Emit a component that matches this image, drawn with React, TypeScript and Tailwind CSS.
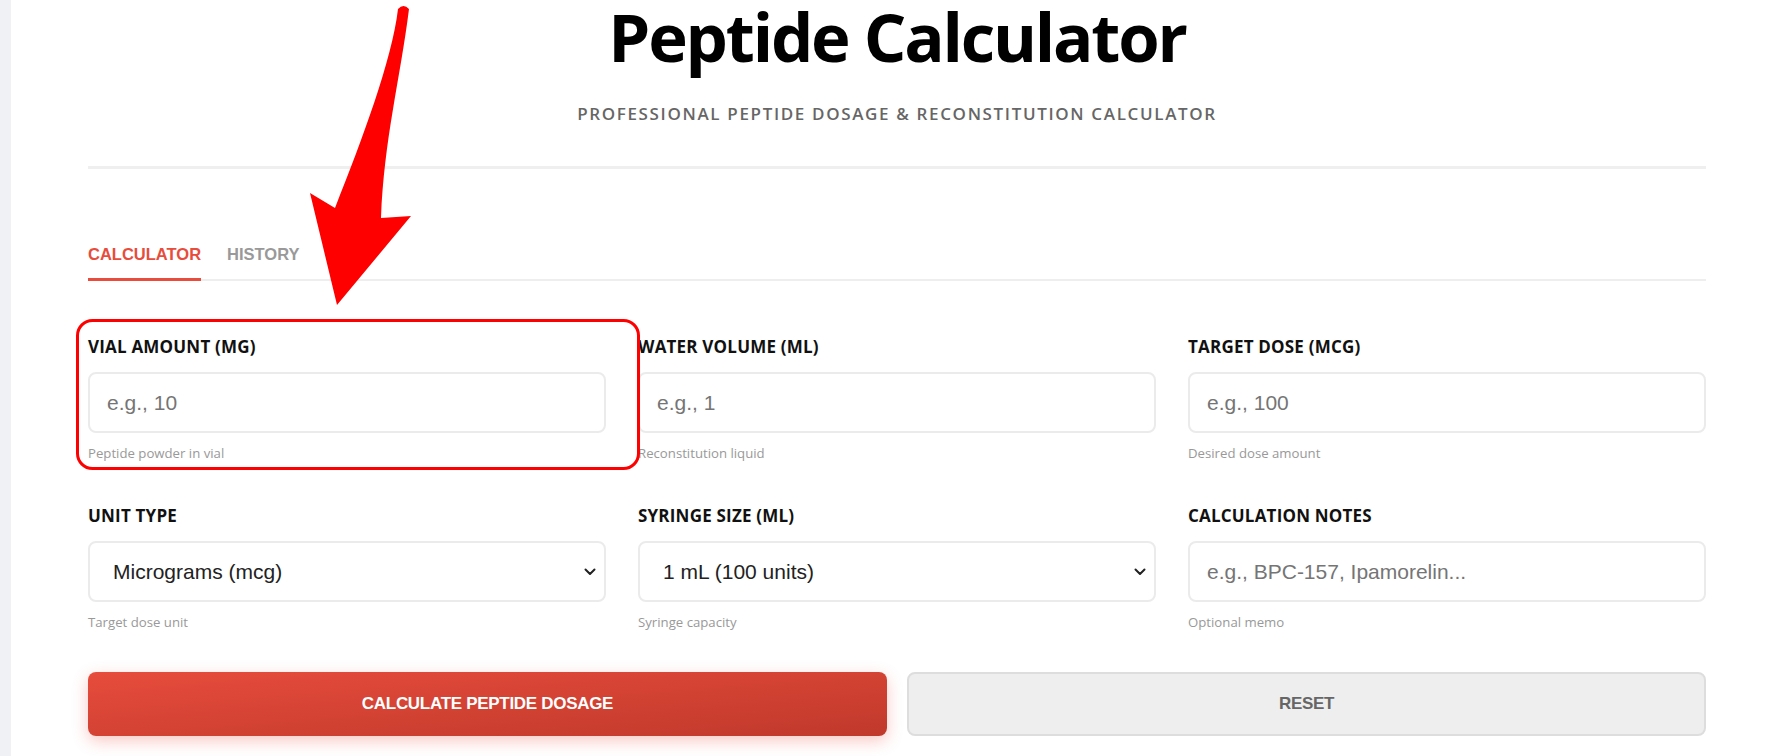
import React from 'react';

const sans = "font-['Open_Sans','Noto_Sans',sans-serif]";
const arial = "font-['Liberation_Sans',Arial,sans-serif]";

const inputClass =
  "h-[61px] w-full rounded-lg border-2 border-[#ebebeb] bg-white px-[17px] font-['Liberation_Sans',Arial,sans-serif] text-[21px] text-[#222] outline-none placeholder:text-[#757575]";

interface FieldProps {
  label: string;
  helper: string;
  children: React.ReactNode;
}

const Field = ({ label, helper, children }: FieldProps) => (
  <div className="flex flex-col">
    <label className={`${sans} mb-[13px] text-[17px] leading-6 font-bold uppercase tracking-[0.2px] text-[#111]`}>
      {label}
    </label>
    {children}
    <p className={`${sans} mt-[10px] text-[13.2px] leading-5 text-[#999]`}>{helper}</p>
  </div>
);

interface SelectProps {
  value: string;
  options: { value: string; label: string }[];
}

const Select = ({ value, options }: SelectProps) => (
  <div className="relative">
    <select className={`${inputClass} appearance-none pl-[23px] pr-10`} defaultValue={value}>
      {options.map((o) => (
        <option key={o.value} value={o.value}>
          {o.label}
        </option>
      ))}
    </select>
    <svg
      className="pointer-events-none absolute right-[10px] top-1/2 -translate-y-1/2"
      width="12"
      height="8"
      viewBox="0 0 12 8"
      fill="none"
    >
      <path d="M1.5 1.5 L6 6 L10.5 1.5" stroke="#222" strokeWidth="2" strokeLinecap="round" strokeLinejoin="round" />
    </svg>
  </div>
);

const App = () => {
  return (
    <div className="relative flex h-[756px] overflow-hidden bg-[#f0f1f5]">
      <div className="ml-[11px] flex-1 bg-white pl-[77px]">
        <div className="w-[1618px]">
          {/* Header */}
          <header className="border-b-[3px] border-[#efefef] pb-[40px] pt-[3px] text-center">
            <h1 className={`${sans} text-[67px] leading-none font-bold tracking-[-2.2px] text-black`}>
              Peptide Calculator
            </h1>
            <p className={`${sans} mt-[32px] text-[17px] leading-6 font-semibold uppercase tracking-[1.65px] text-[#666]`}>
              Professional Peptide Dosage &amp; Reconstitution Calculator
            </p>
          </header>

          {/* Tabs */}
          <nav className="mt-[75px] flex gap-[26px] border-b-2 border-[#eeeeee]">
            <button className={`${arial} -mb-[2px] border-b-[3px] border-[#e74c3c] pb-[14px] text-[16.5px] leading-5 font-bold uppercase text-[#e74c3c]`}>
              Calculator
            </button>
            <button className={`${arial} -mb-[2px] border-b-[3px] border-transparent pb-[14px] text-[16.5px] leading-5 font-bold uppercase text-[#999]`}>
              History
            </button>
          </nav>

          {/* Form */}
          <div className="mt-[54px] grid grid-cols-3 gap-x-8 gap-y-[41px]">
            <Field label="Vial Amount (mg)" helper="Peptide powder in vial">
              <input type="number" placeholder="e.g., 10" className={inputClass} />
            </Field>
            <Field label="Water Volume (mL)" helper="Reconstitution liquid">
              <input type="number" placeholder="e.g., 1" className={inputClass} />
            </Field>
            <Field label="Target Dose (mcg)" helper="Desired dose amount">
              <input type="number" placeholder="e.g., 100" className={inputClass} />
            </Field>
            <Field label="Unit Type" helper="Target dose unit">
              <Select
                value="mcg"
                options={[
                  { value: 'mcg', label: 'Micrograms (mcg)' },
                  { value: 'mg', label: 'Milligrams (mg)' },
                ]}
              />
            </Field>
            <Field label="Syringe Size (mL)" helper="Syringe capacity">
              <Select
                value="1"
                options={[
                  { value: '1', label: '1 mL (100 units)' },
                  { value: '0.5', label: '0.5 mL (50 units)' },
                  { value: '0.3', label: '0.3 mL (30 units)' },
                ]}
              />
            </Field>
            <Field label="Calculation Notes" helper="Optional memo">
              <input type="text" placeholder="e.g., BPC-157, Ipamorelin..." className={inputClass} />
            </Field>
          </div>

          {/* Actions */}
          <div className="mt-[40px] grid grid-cols-2 gap-5">
            <button className={`${arial} h-[64px] rounded-lg bg-gradient-to-br from-[#e74c3c] to-[#c0392b] text-[17px] font-bold uppercase tracking-[-0.3px] text-white shadow-[0_5px_16px_rgba(231,76,60,0.3)]`}>
              Calculate Peptide Dosage
            </button>
            <button className={`${arial} h-[64px] rounded-lg border-2 border-[#dddddd] bg-[#eeeeee] text-[17px] font-bold uppercase tracking-[-0.3px] text-[#666]`}>
              Reset
            </button>
          </div>
        </div>
      </div>

      {/* Annotation overlay */}
      <svg
        className="pointer-events-none absolute left-0 top-0"
        width="1768"
        height="756"
        viewBox="0 0 1768 756"
      >
        <rect x="77.5" y="320.5" width="561" height="148" rx="15" fill="none" stroke="#ff0000" strokeWidth="3" />
        <path
          d="M398 9 Q403.5 3 409 9 C400 80 384 140 381 218 L411 216 L337 305 L310 193 L335 208 C362 140 392 60 398 9 Z"
          fill="#ff0000"
        />
      </svg>
    </div>
  );
};

export default App;
